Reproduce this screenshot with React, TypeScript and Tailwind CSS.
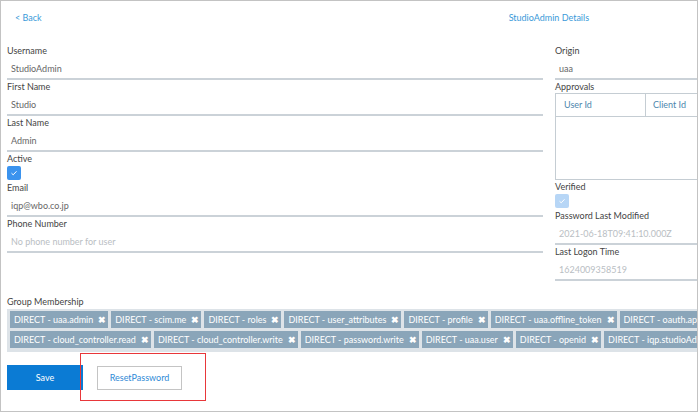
import React from "react";

const rowOne = [
  "DIRECT - uaa.admin",
  "DIRECT - scim.me",
  "DIRECT - roles",
  "DIRECT - user_attributes",
  "DIRECT - profile",
  "DIRECT - uaa.offline_token",
  "DIRECT - oauth.approvals",
];

const rowTwo = [
  "DIRECT - cloud_controller.read",
  "DIRECT - cloud_controller.write",
  "DIRECT - password.write",
  "DIRECT - uaa.user",
  "DIRECT - openid",
  "DIRECT - iqp.studioAdmin",
];

function Field({ label, value, muted }: { label: string; value: string; muted?: boolean }) {
  return (
    <div>
      <div className="h-[13px] leading-[13px] text-[#444]">{label}</div>
      <div
        className={`flex h-[23px] items-center border-b-2 border-[#cbd2d8] pl-[4px] pt-[2px] ${muted ? "text-[#b9bec3]" : "text-[#666]"}`}
      >
        {value}
      </div>
    </div>
  );
}

function Check({ light }: { light?: boolean }) {
  return (
    <div
      className={`my-[1px] flex h-[14px] w-[14px] items-center justify-center rounded-[2px] ${light ? "bg-[#b7d6f6]" : "bg-[#3b93ee]"}`}
    >
      <svg width="8" height="8" viewBox="0 0 8 8">
        <path d="M1.5 4.2 L3.2 5.8 L6.5 2.3" fill="none" stroke="white" strokeWidth="1" />
      </svg>
    </div>
  );
}

function Tag({ text }: { text: string }) {
  return (
    <div className="flex h-[17px] shrink-0 items-center gap-[5px] whitespace-nowrap bg-[#8aa5b9] pl-[4px] pr-[2px] text-white">
      <span>{text}</span>
      <span className="text-[9px] font-bold">✖</span>
    </div>
  );
}

export default function App() {
  return (
    <div className="h-[413px] w-[700px] overflow-hidden bg-white font-['Lato',sans-serif] text-[9px]">
      <div className="relative h-[412px] w-[698px] overflow-hidden border border-[#c3c3c3]">
        <div className="flex h-[43px] items-start pt-[10px]">
          <span className="ml-[14px] text-[#3a9ad9]">&lt; Back</span>
          <span className="ml-[467px] text-[#3a9ad9]">StudioAdmin Details</span>
        </div>

        <div className="flex pl-[6px]">
          <div className="w-[536px] shrink-0">
            <Field label="Username" value="StudioAdmin" />
            <Field label="First Name" value="Studio" />
            <Field label="Last Name" value="Admin" />
            <div className="h-[13px] leading-[13px] text-[#444]">Active</div>
            <Check />
            <Field label="Email" value="iqp@wbo.co.jp" />
            <Field label="Phone Number" value="No phone number for user" muted />
          </div>

          <div className="ml-[12px] w-[160px] shrink-0">
            <Field label="Origin" value="uaa" />
            <div className="h-[13px] leading-[13px] text-[#444]">Approvals</div>
            <div className="h-[87px] w-[200px] border border-[#c5cdd3]">
              <div className="flex h-[23px] border-b border-[#c5cdd3] text-[#4d86ad]">
                <div className="flex w-[90px] items-center border-r border-[#c5cdd3] pl-[8px]">User Id</div>
                <div className="flex items-center pl-[7px]">Client Id</div>
              </div>
            </div>
            <div className="h-[13px] leading-[13px] text-[#444]">Verified</div>
            <Check light />
            <Field label="Password Last Modified" value="2021-06-18T09:41:10.000Z" muted />
            <Field label="Last Logon Time" value="1624009358519" muted />
          </div>
        </div>

        <div className="mt-[14px] pl-[6px]">
          <div className="h-[13px] leading-[13px] text-[#444]">Group Membership</div>
          <div className="mt-[1px] flex w-[700px] flex-col gap-[3px] bg-[#dde3e8] pb-[4px] pl-[3px] pt-[2px]">
            <div className="flex gap-[3px]">
              {rowOne.map((t) => (
                <Tag key={t} text={t} />
              ))}
            </div>
            <div className="flex gap-[3px]">
              {rowTwo.map((t) => (
                <Tag key={t} text={t} />
              ))}
            </div>
          </div>

          <div className="mt-[13px] flex items-center gap-[14px]">
            <button className="h-[25px] w-[76px] bg-[#0b7bd4] text-white">Save</button>
            <button className="h-[24px] w-[85px] border border-[#c4c4c4] bg-white text-[#2f8ad6]">ResetPassword</button>
          </div>
        </div>

        <div className="absolute left-[79px] top-[352px] h-[48px] w-[126px] border-[1.5px] border-[#e8373a]" />
      </div>
    </div>
  );
}
